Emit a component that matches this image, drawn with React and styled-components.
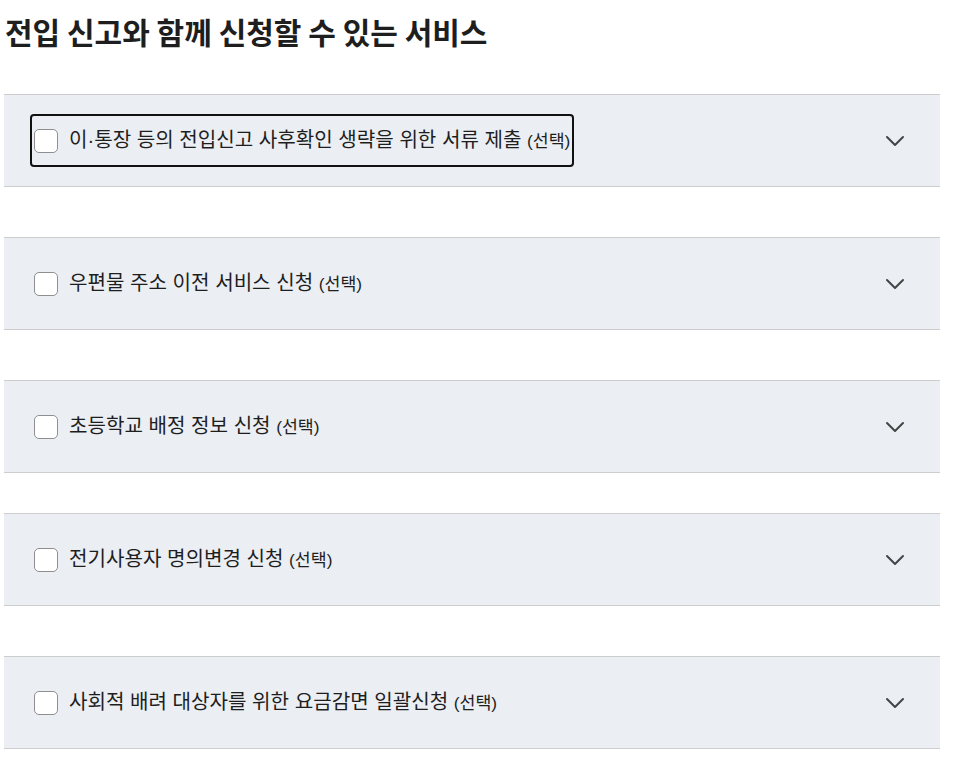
import React from 'react';
import styled, {createGlobalStyle} from 'styled-components';

const GlobalStyle = createGlobalStyle`
  body {
    margin: 0;
    background: #fff;
    font-family: "Noto Sans CJK KR", "Noto Sans", sans-serif;
    color: #1e1e1e;
  }
`;

const Page = styled.div`
  width: 936px;
  padding: 0 4px;
`;

const Heading = styled.h2`
  margin: 9px 0 41px 1px;
  font-size: 30px;
  font-weight: 700;
  line-height: 44px;
  color: #1e1e1e;
`;

const List = styled.div`
  display: flex;
  flex-direction: column;
`;

const Panel = styled.div`
  height: 91px;
  margin-bottom: ${p => p.$gap}px;
  border-top: 1px solid #cdcdcd;
  border-bottom: 1px solid #cdcdcd;
  background: #ebeef3;
  display: flex;
  align-items: center;
  justify-content: space-between;
  padding: 0 35px 0 26px;
`;

const Label = styled.label`
  display: flex;
  align-items: center;
  gap: 11px;
  height: 49px;
  padding: 0 2px;
  border: 2px solid ${p => (p.$focused ? '#111' : 'transparent')};
  border-radius: 4px;
  cursor: pointer;
`;

const Box = styled.span`
  width: 22px;
  height: 22px;
  border: 1px solid #8f8f8f;
  border-radius: 5px;
  background: #fff;
  flex-shrink: 0;
`;

const Text = styled.span`
  font-family: "Liberation Sans", "Noto Sans CJK KR", sans-serif;
  font-size: 20.1px;
  line-height: 26px;
  color: #1e1e1e;
`;

const Optional = styled.span`
  font-size: 17.3px;
`;

const Toggle = styled.button`
  border: 0;
  background: none;
  padding: 0;
  display: flex;
  color: #444;
  cursor: pointer;
`;

const Chevron = () => (
  <svg width="20" height="12" viewBox="0 0 20 12" fill="none">
    <path d="M2 2l8 8 8-8" stroke="currentColor" strokeWidth="2" strokeLinecap="round" strokeLinejoin="round"/>
  </svg>
);

const items = [
  {label: '이·통장 등의 전입신고 사후확인 생략을 위한 서류 제출', gap: 50, focused: true},
  {label: '우편물 주소 이전 서비스 신청', gap: 50},
  {label: '초등학교 배정 정보 신청', gap: 40},
  {label: '전기사용자 명의변경 신청', gap: 50},
  {label: '사회적 배려 대상자를 위한 요금감면 일괄신청', gap: 0},
];

const App = () => (
  <Page>
    <GlobalStyle/>
    <Heading>전입 신고와 함께 신청할 수 있는 서비스</Heading>
    <List>
      {items.map((item, i) => (
        <Panel key={i} $gap={item.gap}>
          <Label $focused={item.focused}>
            <Box/>
            <Text>{item.label} <Optional>(선택)</Optional></Text>
          </Label>
          <Toggle aria-label="펼치기"><Chevron/></Toggle>
        </Panel>
      ))}
    </List>
  </Page>
);

export default App;
